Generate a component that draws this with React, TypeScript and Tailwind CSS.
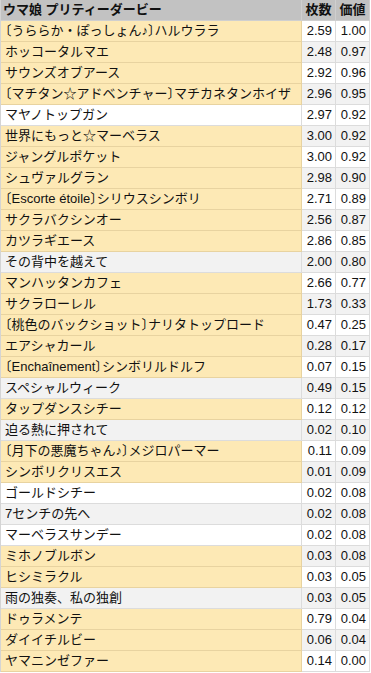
import React from "react";

type Row = { name: string; a: string; b: string; hl: boolean };

const rows: Row[] = [
  { name: "〔うららか・ぽっしょん♪〕ハルウララ", a: "2.59", b: "1.00", hl: true },
  { name: "ホッコータルマエ", a: "2.48", b: "0.97", hl: true },
  { name: "サウンズオブアース", a: "2.92", b: "0.96", hl: true },
  { name: "〔マチタン☆アドベンチャー〕マチカネタンホイザ", a: "2.96", b: "0.95", hl: true },
  { name: "マヤノトップガン", a: "2.97", b: "0.92", hl: false },
  { name: "世界にもっと☆マーベラス", a: "3.00", b: "0.92", hl: true },
  { name: "ジャングルポケット", a: "3.00", b: "0.92", hl: true },
  { name: "シュヴァルグラン", a: "2.98", b: "0.90", hl: true },
  { name: "〔Escorte étoile〕シリウスシンボリ", a: "2.71", b: "0.89", hl: true },
  { name: "サクラバクシンオー", a: "2.56", b: "0.87", hl: true },
  { name: "カツラギエース", a: "2.86", b: "0.85", hl: true },
  { name: "その背中を越えて", a: "2.00", b: "0.80", hl: false },
  { name: "マンハッタンカフェ", a: "2.66", b: "0.77", hl: true },
  { name: "サクラローレル", a: "1.73", b: "0.33", hl: true },
  { name: "〔桃色のバックショット〕ナリタトップロード", a: "0.47", b: "0.25", hl: true },
  { name: "エアシャカール", a: "0.28", b: "0.17", hl: true },
  { name: "〔Enchaînement〕シンボリルドルフ", a: "0.07", b: "0.15", hl: true },
  { name: "スペシャルウィーク", a: "0.49", b: "0.15", hl: false },
  { name: "タップダンスシチー", a: "0.12", b: "0.12", hl: true },
  { name: "迫る熱に押されて", a: "0.02", b: "0.10", hl: false },
  { name: "〔月下の悪魔ちゃん♪〕メジロパーマー", a: "0.11", b: "0.09", hl: true },
  { name: "シンボリクリスエス", a: "0.01", b: "0.09", hl: true },
  { name: "ゴールドシチー", a: "0.02", b: "0.08", hl: false },
  { name: "7センチの先へ", a: "0.02", b: "0.08", hl: false },
  { name: "マーベラスサンデー", a: "0.02", b: "0.08", hl: false },
  { name: "ミホノブルボン", a: "0.03", b: "0.08", hl: true },
  { name: "ヒシミラクル", a: "0.03", b: "0.05", hl: true },
  { name: "雨の独奏、私の独創", a: "0.03", b: "0.05", hl: false },
  { name: "ドゥラメンテ", a: "0.79", b: "0.04", hl: true },
  { name: "ダイイチルビー", a: "0.06", b: "0.04", hl: true },
  { name: "ヤマニンゼファー", a: "0.14", b: "0.00", hl: true },
];

const font = {
  fontFamily: '"Liberation Sans", "Noto Sans CJK JP", sans-serif',
};

function Name({ text }: { text: string }) {
  const parts = text.split(/([〔〕♪])/).filter((p) => p !== "");
  return (
    <>
      {parts.map((p, i) =>
        p === "〔" || p === "〕" || p === "♪" ? (
          <span key={i} className="[font-feature-settings:'halt']">
            {p}
          </span>
        ) : (
          <span key={i}>{p}</span>
        )
      )}
    </>
  );
}

export default function App() {
  return (
    <div className="bg-white min-h-[673px] text-[13px] text-[#111]" style={font}>
      <div className="w-[370px] border-l border-[#d4d4d4]">
        <div className="flex h-[21px] bg-[#c2c2c2] border-b border-[#cfcfcf] font-bold">
          <div className="w-[301px] border-r border-[#cfcfcf] flex items-center pl-[2px]">
            ウマ娘 プリティーダービー
          </div>
          <div className="w-[34px] border-r border-[#cfcfcf] flex items-center justify-center">
            枚数
          </div>
          <div className="w-[34px] border-r border-[#cfcfcf] flex items-center justify-center">
            価値
          </div>
        </div>
        {rows.map((r, i) => {
          const odd = i % 2 === 0;
          const numBg = odd ? "bg-white" : "bg-[#f2f2f2]";
          const nameCls = r.hl
            ? "bg-[#fde9b5] border-[#e8d3a0]"
            : odd
            ? "bg-white border-[#dcdcdc]"
            : "bg-[#f2f2f2] border-[#dcdcdc]";
          return (
            <div key={i} className="flex h-[21px]">
              <div
                className={`w-[301px] h-[21px] border-b border-r ${nameCls} flex items-center pl-[4px] whitespace-nowrap overflow-hidden`}
              >
                <span>
                  <Name text={r.name} />
                </span>
              </div>
              <div
                className={`w-[34px] h-[21px] border-b border-r border-[#dcdcdc] ${numBg} flex items-center justify-end pr-[3px]`}
              >
                {r.a}
              </div>
              <div
                className={`w-[34px] h-[21px] border-b border-r border-[#dcdcdc] ${numBg} flex items-center justify-end pr-[3px]`}
              >
                {r.b}
              </div>
            </div>
          );
        })}
      </div>
    </div>
  );
}
